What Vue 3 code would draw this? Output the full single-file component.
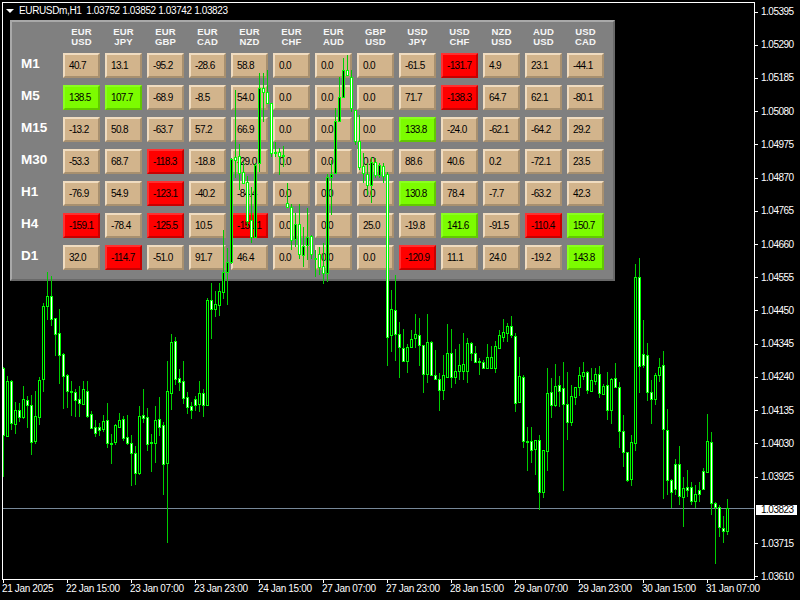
<script setup>
import { computed } from 'vue'

const title = 'EURUSDm,H1\u00a0\u00a01.03752 1.03852 1.03742 1.03823'

const pairs = [
  ['EUR', 'USD'], ['EUR', 'JPY'], ['EUR', 'GBP'], ['EUR', 'CAD'], ['EUR', 'NZD'],
  ['EUR', 'CHF'], ['EUR', 'AUD'], ['GBP', 'USD'], ['USD', 'JPY'], ['USD', 'CHF'],
  ['NZD', 'USD'], ['AUD', 'USD'], ['USD', 'CAD']
]

const rows = [
  { tf: 'M1', values: ['40.7', '13.1', '-95.2', '-28.6', '58.8', '0.0', '0.0', '0.0', '-61.5', '-131.7', '4.9', '23.1', '-44.1'] },
  { tf: 'M5', values: ['138.5', '107.7', '-68.9', '-8.5', '54.0', '0.0', '0.0', '0.0', '71.7', '-138.3', '64.7', '62.1', '-80.1'] },
  { tf: 'M15', values: ['-13.2', '50.8', '-63.7', '57.2', '66.9', '0.0', '0.0', '0.0', '133.8', '-24.0', '-62.1', '-64.2', '29.2'] },
  { tf: 'M30', values: ['-53.3', '68.7', '-118.3', '-18.8', '-29.0', '0.0', '0.0', '0.0', '88.6', '40.6', '0.2', '-72.1', '23.5'] },
  { tf: 'H1', values: ['-76.9', '54.9', '-123.1', '-40.2', '-84.4', '0.0', '0.0', '0.0', '130.8', '78.4', '-7.7', '-63.2', '42.3'] },
  { tf: 'H4', values: ['-159.1', '-78.4', '-125.5', '10.5', '-151.1', '0.0', '0.0', '25.0', '-19.8', '141.6', '-91.5', '-110.4', '150.7'] },
  { tf: 'D1', values: ['32.0', '-114.7', '-51.0', '91.7', '46.4', '0.0', '0.0', '0.0', '-120.9', '11.1', '24.0', '-19.2', '143.8'] }
]

const cellClass = (v) => {
  if (parseFloat(v) >= 100) return 'up'
  if (parseFloat(v) <= -100) return 'down'
  return ''
}

const prices = [
  '1.05395', '1.05290', '1.05185', '1.05080', '1.04975', '1.04870', '1.04765', '1.04660', '1.04555',
  '1.04450', '1.04345', '1.04240', '1.04135', '1.04030', '1.03925', '1.03823', '1.03715', '1.03610'
]
const currentPrice = '1.03823'

const times = [
  '21 Jan 2025', '22 Jan 15:00', '23 Jan 07:00', '23 Jan 23:00', '24 Jan 15:00', '27 Jan 07:00',
  '27 Jan 23:00', '28 Jan 15:00', '29 Jan 07:00', '29 Jan 23:00', '30 Jan 15:00', '31 Jan 07:00'
]

// wick top, body top, body bottom, wick bottom (page pixels), 1 = white body
const bars = [
  [367,368,435,477,1],[376,381,436,436,0],[380,381,423,430,1],[402,410,424,434,0],[403,410,417,422,1],
  [386,399,417,419,0],[396,400,405,428,1],[395,405,442,455,1],[391,416,441,444,0],[377,380,417,425,0],
  [303,306,379,392,0],[272,296,306,320,0],[276,296,319,326,1],[318,318,334,356,1],[309,333,355,384,1],
  [353,354,376,409,1],[374,375,391,408,1],[381,391,392,416,1],[389,392,400,417,1],[386,399,403,417,1],
  [381,389,404,405,0],[381,391,416,418,1],[411,414,428,429,1],[420,427,433,437,1],[423,427,430,436,1],
  [415,421,429,432,0],[403,420,443,448,1],[434,443,444,464,1],[424,425,442,445,0],[413,420,427,427,0],
  [416,419,438,441,1],[415,437,443,445,1],[435,443,453,486,1],[446,453,473,485,1],[406,416,473,475,0],
  [389,415,418,423,1],[408,417,444,451,1],[434,442,443,472,1],[406,420,443,463,0],[397,419,427,436,1],
  [422,425,464,495,1],[361,391,463,543,0],[334,342,393,410,0],[337,341,379,385,1],[369,378,382,391,1],
  [361,381,398,404,1],[392,397,407,414,1],[402,406,410,419,1],[396,399,405,411,1],[381,393,404,412,0],
  [389,393,405,417,1],[298,300,405,405,0],[283,300,309,339,1],[291,304,309,317,0],[283,291,305,316,0],
  [230,272,292,299,0],[248,262,272,305,0],[158,159,262,264,0],[90,157,160,178,1],[144,156,173,190,1],
  [162,172,183,183,1],[176,182,221,227,1],[187,220,237,243,1],[163,165,237,237,0],[73,88,163,172,0],
  [73,88,92,122,1],[70,92,103,103,1],[103,103,153,157,1],[142,152,153,157,1],[148,152,156,175,1],
  [146,155,156,167,1],[183,203,207,207,1],[204,207,240,250,1],[213,224,239,247,0],[204,224,254,259,1],
  [227,246,255,267,0],[208,237,245,260,0],[235,236,254,259,1],[250,258,259,277,1],[247,254,267,275,1],
  [243,266,273,284,1],[174,177,273,282,0],[160,174,177,215,0],[108,121,173,173,0],[77,97,121,121,0],
  [58,70,97,98,0],[55,70,75,75,1],[70,77,108,112,1],[110,110,141,145,1],[115,141,167,170,1],
  [153,166,173,183,1],[163,174,185,195,1],[157,162,185,203,0],[158,162,175,178,1],[163,165,175,178,0],
  [163,166,176,183,1],[172,174,337,366,1],[290,309,335,352,0],[275,310,334,361,1],[322,334,347,378,1],
  [329,348,361,362,1],[344,347,361,373,0],[330,339,347,348,0],[314,334,338,348,0],[318,335,345,366,1],
  [345,345,374,393,1],[314,342,374,383,0],[341,342,375,375,1],[350,375,379,380,1],[373,379,390,411,1],
  [355,375,390,400,0],[324,353,377,378,0],[329,353,377,388,1],[349,371,377,384,0],[344,365,371,380,0],
  [333,364,371,380,0],[338,343,371,383,0],[342,343,353,361,1],[346,353,362,363,1],[358,361,362,375,1],
  [360,362,368,369,1],[344,357,368,369,0],[346,357,368,369,0],[341,346,368,373,0],[330,335,348,348,0],
  [319,332,337,342,0],[323,326,333,342,0],[316,326,335,338,1],[333,336,403,412,1],[357,376,402,402,0],
  [375,377,441,448,1],[427,441,442,471,1],[427,441,450,463,1],[440,440,449,475,0],[435,440,492,510,1],
  [450,450,492,498,0],[368,393,451,471,0],[378,392,405,418,1],[364,386,405,407,0],[376,385,391,407,1],
  [362,388,404,491,1],[372,404,422,440,1],[385,396,422,426,0],[387,387,397,405,0],[367,375,387,396,0],
  [362,372,376,380,0],[371,372,390,394,1],[368,380,391,391,0],[368,374,381,385,0],[366,374,393,398,1],
  [384,386,394,395,0],[372,385,410,420,1],[378,379,410,424,0],[363,378,387,388,1],[382,387,431,448,1],
  [415,431,452,467,1],[452,452,480,482,1],[435,442,479,486,0],[264,277,443,451,0],[258,277,366,393,1],
  [320,354,365,368,1],[343,355,392,401,1],[380,392,399,424,1],[373,375,399,405,0],[358,367,375,382,0],
  [351,365,429,499,1],[409,430,480,495,1],[479,480,492,508,1],[459,464,489,495,1],[446,464,496,505,1],
  [477,488,497,527,0],[470,487,490,497,1],[482,487,501,505,1],[485,494,501,508,0],[482,490,494,502,1],
  [468,471,489,490,1],[414,441,472,473,0],[432,442,503,515,1],[502,503,507,564,1],[505,507,527,537,1],
  [516,528,531,543,1],[499,508,531,535,0]
]

const candles = computed(() => bars.map((b, i) => ({
  x: 3 + 4 * i,
  wickTop: b[0],
  top: b[1],
  bottom: b[2],
  wickBottom: b[3],
  fill: b[4] ? '#fff' : '#000'
})))
</script>

<template>
  <div class="terminal">
    <div class="chart">
      <div class="panel">
        <div></div>
        <div v-for="p in pairs" :key="p.join('')" class="pair">{{ p[0] }}<br>{{ p[1] }}</div>
        <template v-for="row in rows" :key="row.tf">
          <div class="tf">{{ row.tf }}</div>
          <div v-for="(v, i) in row.values" :key="i" class="cell" :class="cellClass(v)">{{ v }}</div>
        </template>
      </div>

      <svg class="bars" width="751" height="576" viewBox="3 3 751 576" shape-rendering="crispEdges">
        <line x1="3" x2="754" y1="508.5" y2="508.5" stroke="#778899" />
        <g v-for="c in candles" :key="c.x">
          <line :x1="c.x + 0.5" :x2="c.x + 0.5" :y1="c.wickTop" :y2="c.wickBottom" stroke="#0c0" />
          <rect :x="c.x - 0.5" :y="c.top + 0.5" width="2" :height="Math.max(c.bottom - c.top, 1)" :fill="c.fill" stroke="#0f0" />
        </g>
      </svg>

      <div class="title"><span class="arrow"></span>{{ title }}</div>
    </div>

    <div class="price-axis">
      <div v-for="p in prices" :key="p" class="price" :class="{ current: p === currentPrice }">
        <span class="tick"></span>
        <span class="price-text">{{ p }}</span>
      </div>
    </div>

    <div class="time-axis">
      <div v-for="t in times" :key="t" class="time">{{ t }}</div>
    </div>
  </div>
</template>

<style>
html, body { margin: 0; background: #000; }
</style>

<style scoped>
.terminal {
  width: 800px;
  height: 600px;
  box-sizing: border-box;
  padding: 2px 0 0 2px;
  background: #000;
  display: grid;
  grid-template-columns: 753px 45px;
  grid-template-rows: 578px 20px;
  overflow: hidden;
  color: #fff;
  font-family: "Liberation Sans", Arial, sans-serif;
  font-size: 10px;
}
.chart {
  position: relative;
  box-sizing: border-box;
  border: 1px solid #fff;
  overflow: hidden;
}
.title {
  position: absolute;
  left: 3px;
  top: 2px;
  height: 12px;
  line-height: 12px;
  display: flex;
  align-items: center;
  letter-spacing: -0.37px;
  font-size: 10px;
  white-space: pre;
}
.arrow {
  width: 0;
  height: 0;
  border-left: 4px solid transparent;
  border-right: 4px solid transparent;
  border-top: 4px solid #fff;
  margin-right: 5px;
}
.panel {
  position: absolute;
  left: 7px;
  top: 17px;
  box-sizing: border-box;
  width: 605px;
  height: 261px;
  padding: 5px 9px 9px;
  background: #808080;
  border: 2px solid;
  border-color: #a9a9a9 #696969 #696969 #a9a9a9;
  display: grid;
  grid-template-columns: repeat(14, 37px);
  grid-template-rows: 19px repeat(7, 25px);
  column-gap: 5px;
  row-gap: 7px;
}
.pair {
  font-size: 9.5px;
  font-weight: bold;
  line-height: 10px;
  text-align: center;
  color: #f6f6f6;
  letter-spacing: 0.2px;
}
.tf {
  font-size: 13.5px;
  font-weight: bold;
  line-height: 22px;
  white-space: nowrap;
}
.cell {
  box-sizing: border-box;
  padding-left: 4px;
  background: #d2b48c;
  border: 2px solid;
  border-color: #f0dcc0 #a8906f #a8906f #f0dcc0;
  color: #000;
  font-size: 10px;
  letter-spacing: -0.65px;
  line-height: 21px;
  white-space: nowrap;
}
.cell.up {
  background: #7cfc00;
  border-color: #8aff20 #62c800 #62c800 #8aff20;
}
.cell.down {
  background: #f00;
  border-color: #ff3030 #c80000 #c80000 #ff3030;
}
.bars {
  position: absolute;
  left: 0;
  top: 0;
}
.price-axis {
  display: flex;
  flex-direction: column;
  gap: 21.22px;
  padding-top: 4px;
}
.price {
  display: flex;
  align-items: center;
  flex: 0 0 12px;
  letter-spacing: -0.5px;
  line-height: 10px;
}
.tick {
  width: 3px;
  height: 1px;
  margin-right: 3px;
  background: #fff;
}
.current .tick {
  visibility: hidden;
}
.current .price-text {
  width: 36px;
  margin-left: -5px;
  padding-left: 5px;
  background: #fff;
  color: #000;
}
.time-axis {
  grid-column: 1 / 3;
  display: flex;
  padding-left: 1px;
}
.time {
  flex: 0 0 64px;
  position: relative;
  padding-top: 3px;
  text-indent: -1px;
  letter-spacing: -0.35px;
  line-height: 12px;
  white-space: nowrap;
}
.time::before {
  content: "";
  position: absolute;
  left: 0;
  top: 0;
  width: 1px;
  height: 3px;
  background: #fff;
}
</style>
